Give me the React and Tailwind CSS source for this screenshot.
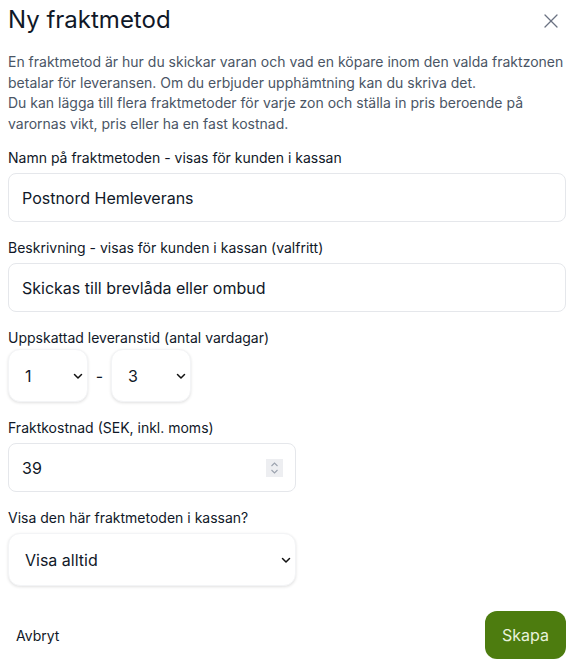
import { X } from 'lucide-react'

function Chevron() {
    return (
        <svg width="10" height="10" viewBox="0 0 10 10" className="pointer-events-none absolute right-[5px] top-1/2 -translate-y-1/2">
            <path d="M1.5 3.5 L5 7 L8.5 3.5" fill="none" stroke="#111" strokeWidth="1.5" strokeLinecap="round" strokeLinejoin="round" />
        </svg>
    )
}

function Select({ value, className }) {
    return (
        <div className={`relative ${className}`}>
            <div className="h-full flex items-center pl-[16px] text-[16px] text-gray-900 bg-white border border-gray-100 rounded-xl shadow-[0_1px_3px_rgba(0,0,0,0.12)]">
                {value}
            </div>
            <Chevron />
        </div>
    )
}

function Label({ children }) {
    return <p className="text-[14px] leading-5 text-gray-900 mb-[5px]">{children}</p>
}

function TextInput({ value, className = '' }) {
    return (
        <div className={`relative h-[49px] flex items-center px-[13px] text-[16px] text-gray-900 bg-white border border-gray-200 rounded-lg ${className}`}>
            {value}
        </div>
    )
}

export default function App() {
    return (
        <div className="w-[577px] h-[666px] bg-white pl-2 pr-[11px] pt-1 font-['Inter',sans-serif] text-gray-900">
            {/* Header */}
            <div className="flex items-center justify-between h-8 mb-4">
                <h1 className="text-[24px] leading-8 font-normal">Ny fraktmetod</h1>
                <X size={24} strokeWidth={1.3} className="text-gray-500 mr-[3px] mt-[2px]" />
            </div>

            <p className="text-[14px] leading-[20.5px] text-gray-600 mb-[14px]">
                En fraktmetod är hur du skickar varan och vad en köpare inom den valda fraktzonen betalar för leveransen. Om du erbjuder upphämtning kan du skriva det.
                <br />
                Du kan lägga till flera fraktmetoder för varje zon och ställa in pris beroende på varornas vikt, pris eller ha en fast kostnad.
            </p>

            <div className="mb-4">
                <Label>Namn på fraktmetoden - visas för kunden i kassan</Label>
                <TextInput value="Postnord Hemleverans" />
            </div>

            <div className="mb-4">
                <Label>Beskrivning - visas för kunden i kassan (valfritt)</Label>
                <TextInput value="Skickas till brevlåda eller ombud" />
            </div>

            <div className="mb-4">
                <p className="text-[14px] leading-5 text-gray-900 mb-[1px]">Uppskattad leveranstid (antal vardagar)</p>
                <div className="flex items-center">
                    <Select value="1" className="w-[80px] h-[53px]" />
                    <span className="w-[23px] text-center text-[16px]">-</span>
                    <Select value="3" className="w-[80px] h-[53px]" />
                </div>
            </div>

            <div className="mb-4">
                <Label>Fraktkostnad (SEK, inkl. moms)</Label>
                <TextInput value="39" className="w-[288px]" />
                <div className="relative -mt-[49px] h-[49px] w-[288px] pointer-events-none">
                    <div className="absolute right-[13px] top-[16px] w-[17px] h-[18px] bg-gray-200/70 flex flex-col items-center justify-center">
                        <svg width="9" height="14" viewBox="0 0 9 14">
                            <path d="M1.5 5 L4.5 2 L7.5 5 M1.5 9 L4.5 12 L7.5 9" fill="none" stroke="#9ca3af" strokeWidth="1.1" />
                        </svg>
                    </div>
                </div>
            </div>

            <div>
                <Label>Visa den här fraktmetoden i kassan?</Label>
                <Select value="Visa alltid" className="w-[288px] h-[53px]" />
            </div>

            {/* Footer */}
            <div className="flex items-center justify-between mt-[25px]">
                <button className="text-[14px] text-gray-900 pl-2">Avbryt</button>
                <button className="h-[48px] w-[81px] rounded-xl bg-[#4d7c0f] text-[16px] text-[#e8f2dc]">Skapa</button>
            </div>
        </div>
    )
}
